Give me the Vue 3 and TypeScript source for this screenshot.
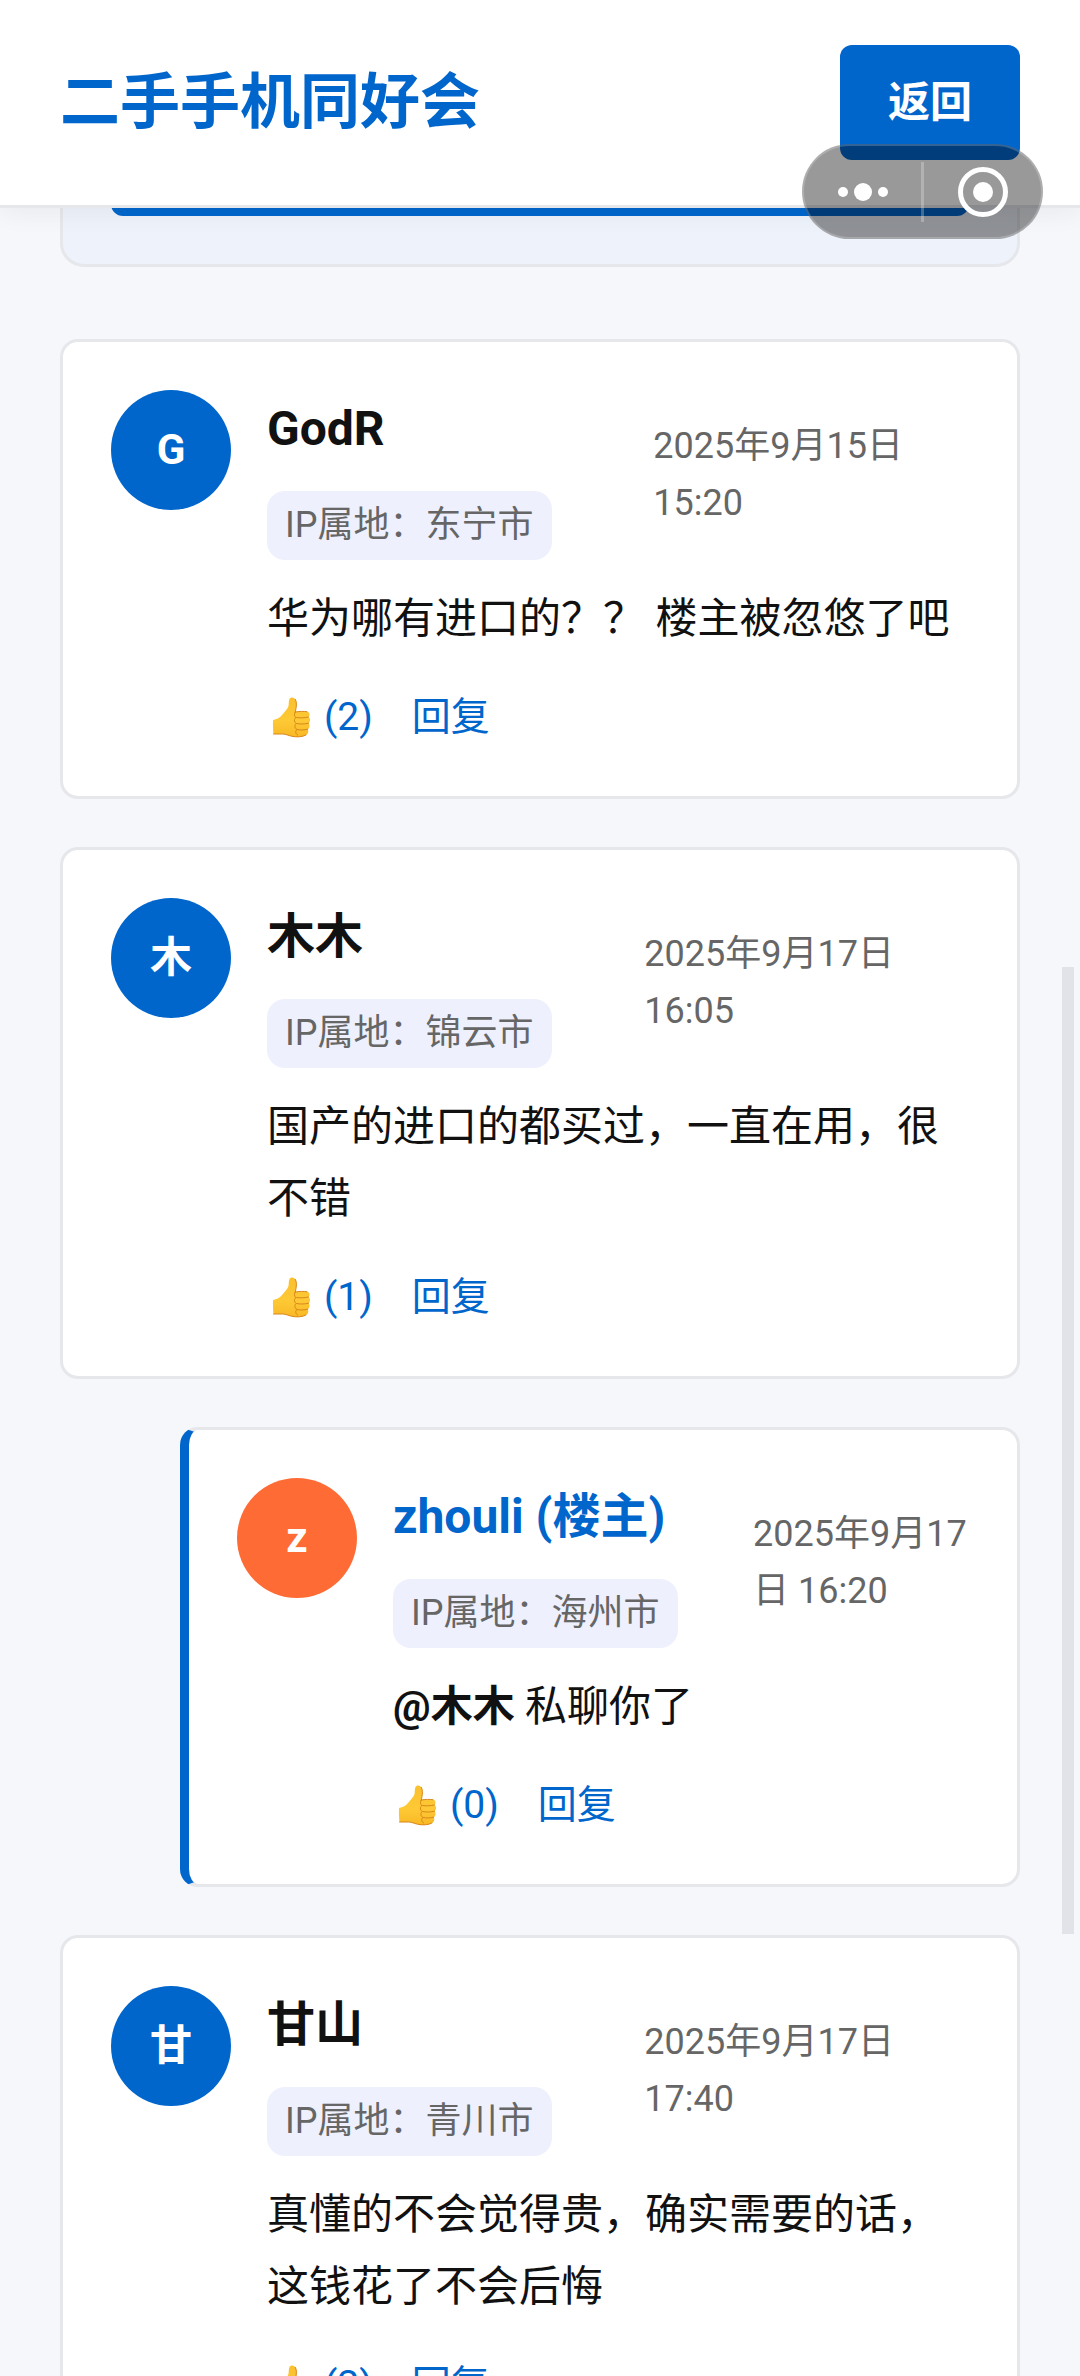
<script setup lang="ts">
interface Comment {
  id: number
  initial: string
  name: string
  city: string
  time: string
  mention?: string
  text: string
  likes: number
  reply?: boolean
}

const comments: Comment[] = [
  { id: 1, initial: 'G', name: 'GodR', city: '东宁市', time: '2025年9月15日 15:20', text: '华为哪有进口的？？ 楼主被忽悠了吧', likes: 2 },
  { id: 2, initial: '木', name: '木木', city: '锦云市', time: '2025年9月17日 16:05', text: '国产的进口的都买过，一直在用，很不错', likes: 1 },
  { id: 3, initial: 'z', name: 'zhouli (楼主)', city: '海州市', time: '2025年9月17日 16:20', mention: '@木木', text: '私聊你了', likes: 0, reply: true },
  { id: 4, initial: '甘', name: '甘山', city: '青川市', time: '2025年9月17日 17:40', text: '真懂的不会觉得贵，确实需要的话，这钱花了不会后悔', likes: 2 },
]
</script>

<template>
  <div class="page">
    <header class="topbar">
      <h1 class="title">二手手机同好会</h1>
      <button type="button" class="back">返回</button>
    </header>

    <div class="capsule">
      <button type="button" class="capsule-btn">
        <svg width="52" height="20" viewBox="0 0 52 20" fill="#fff">
          <circle cx="6" cy="10" r="5" />
          <circle cx="26" cy="10" r="9" />
          <circle cx="46" cy="10" r="5" />
        </svg>
      </button>
      <span class="capsule-line"></span>
      <button type="button" class="capsule-btn">
        <svg width="50" height="50" viewBox="0 0 50 50">
          <circle cx="25" cy="25" r="22.5" fill="none" stroke="#fff" stroke-width="5" />
          <circle cx="25" cy="25" r="10" fill="#fff" />
        </svg>
      </button>
    </div>

    <main class="content">
      <section class="composer">
        <button type="button" class="submit"></button>
      </section>

      <section class="list">
        <article v-for="c in comments" :key="c.id" class="card" :class="{ reply: c.reply }">
          <div class="avatar">{{ c.initial }}</div>
          <div class="body">
            <div class="meta">
              <div class="who">
                <span class="name">{{ c.name }}</span>
                <span class="tag">IP属地：{{ c.city }}</span>
              </div>
              <time class="time">{{ c.time }}</time>
            </div>
            <p class="text"><strong v-if="c.mention">{{ c.mention }}</strong>{{ c.mention ? ' ' : '' }}{{ c.text }}</p>
            <div class="actions">
              <button type="button" class="action">
                <svg class="thumb" width="48" height="42" viewBox="0 0 48 42">
                  <defs>
                    <linearGradient id="skin" x1="0" y1="0" x2="0" y2="1">
                      <stop offset="0" stop-color="#fbc02d" />
                      <stop offset="0.6" stop-color="#fdc935" />
                      <stop offset="1" stop-color="#f9b825" />
                    </linearGradient>
                  </defs>
                  <path
                    d="M6 24C10 23.500 13 21.500 15 19C18 15.500 20.500 13 21.500 10C22 7.500 21.500 5 22.500 3C23.500 .8 27 .8 28.500 3.500C30 6.500 29.500 11 28.300 16C32 15.300 37 15.200 40 15.700C43 16.300 43.200 19.500 41.500 21C43.600 22 43.600 26 41.600 27.200C43.200 28.700 42.800 32 40.700 33.200C41.900 35 41.200 38 39 39C36 41 29 41.400 24.500 40.200C21 39.500 19 38 15.500 38H6.500C6 34 5.800 28 6 24Z"
                    fill="url(#skin)"
                  />
                  <path
                    d="M28.300 16C27.200 17 27 20 28.500 21.500M41.500 21C37 22 33 22 29.500 21.500C27 22.200 26.500 25.800 29 27.300M41.600 27.200C37 28.300 33 28.200 29.500 27.500C27.300 28.500 27.300 32 29.500 33.200M40.700 33.200C37 34.200 33 34.200 30 33.500C28 34.800 28.500 38 30.500 39M6.500 38H15.500C19 38 21 39.500 24.500 40.200C29 41.400 36 41 39 39M28.500 3.500C30 6.500 29.500 11 28.300 16M40 15.700C37 15.200 32 15.300 28.300 16"
                    fill="none"
                    stroke="#d9861b"
                    stroke-width="1"
                    stroke-linecap="round"
                  />
                </svg>
                <span>({{ c.likes }})</span>
              </button>
              <button type="button" class="action">回复</button>
            </div>
          </div>
        </article>
      </section>
    </main>

    <div class="scrollbar"></div>
  </div>
</template>

<style>
body {
  margin: 0;
}
</style>

<style scoped>
.page {
  position: relative;
  height: 100vh;
  overflow: hidden;
  background: #f5f7fb;
  color: #111;
  font-family: Roboto, "Noto Sans CJK SC", sans-serif;
}

button {
  border: 0;
  margin: 0;
  padding: 0;
  background: none;
  font-family: inherit;
  cursor: pointer;
}

.topbar {
  position: relative;
  z-index: 1;
  display: flex;
  align-items: center;
  justify-content: space-between;
  padding: 45px 60px;
  background: #fff;
  border-bottom: 3px solid #e5e7eb;
  box-shadow: 0 6px 24px rgba(0, 0, 0, 0.05);
}

.title {
  margin: 0;
  font-size: 60px;
  line-height: 96px;
  font-weight: 700;
  color: #0066cc;
}

.back {
  padding: 24px 48px;
  border-radius: 12px;
  background: #0066cc;
  color: #fff;
  font-size: 42px;
  line-height: 67px;
  font-weight: 700;
}

.capsule {
  position: absolute;
  z-index: 2;
  top: 144px;
  right: 37px;
  box-sizing: border-box;
  display: flex;
  align-items: center;
  width: 241px;
  height: 95px;
  border: 2px solid rgba(255, 255, 255, 0.2);
  border-radius: 48px;
  background: rgba(0, 0, 0, 0.4);
}

.capsule-btn {
  flex: 1;
  display: flex;
  align-items: center;
  justify-content: center;
  height: 100%;
}

.capsule-line {
  width: 3px;
  height: 60px;
  background: rgba(255, 255, 255, 0.25);
}

.content {
  padding: 0 60px;
}

.composer {
  display: flex;
  margin-top: -60px;
  padding: 20px 48px 48px;
  border: 3px solid #e5e7eb;
  border-radius: 24px;
  background: #eef2fb;
}

.submit {
  flex: 1;
  height: 45px;
  border-radius: 12px;
  background: #0066cc;
}

.list {
  display: flex;
  flex-direction: column;
  gap: 48px;
  margin-top: 72px;
}

.card {
  display: flex;
  gap: 36px;
  padding: 48px;
  border: 3px solid #e5e7eb;
  border-radius: 18px;
  background: #fff;
}

.card.reply {
  margin-left: 120px;
  border-left: 9px solid #0066cc;
}

.avatar {
  flex: none;
  width: 120px;
  height: 120px;
  border-radius: 50%;
  background: #0066cc;
  color: #fff;
  font-size: 42px;
  line-height: 120px;
  font-weight: 700;
  text-align: center;
}

.reply .avatar {
  background: #ff6b35;
}

.body {
  flex: 1;
  min-width: 0;
}

.meta {
  display: flex;
  align-items: center;
  justify-content: space-between;
}

.who {
  display: flex;
  flex-wrap: wrap;
  gap: 24px;
}

.name {
  font-size: 48px;
  line-height: 77px;
  font-weight: 700;
}

.reply .name {
  color: #0066cc;
}

.tag {
  padding: 6px 18px;
  border-radius: 18px;
  background: #eef1fd;
  color: #666;
  font-size: 36px;
  line-height: 57px;
  white-space: nowrap;
}

.time {
  color: #666;
  font-size: 36px;
  line-height: 57px;
}

.text {
  margin: 23px 0 31px;
  font-size: 42px;
  line-height: 72px;
}

.actions {
  display: flex;
  gap: 39px;
}

.action {
  display: flex;
  align-items: center;
  gap: 9px;
  color: #0066cc;
  font-size: 39px;
  line-height: 62px;
}

.scrollbar {
  position: absolute;
  z-index: 3;
  top: 967px;
  right: 6px;
  width: 12px;
  height: 967px;
  background: #e1e3e8;
}
</style>
